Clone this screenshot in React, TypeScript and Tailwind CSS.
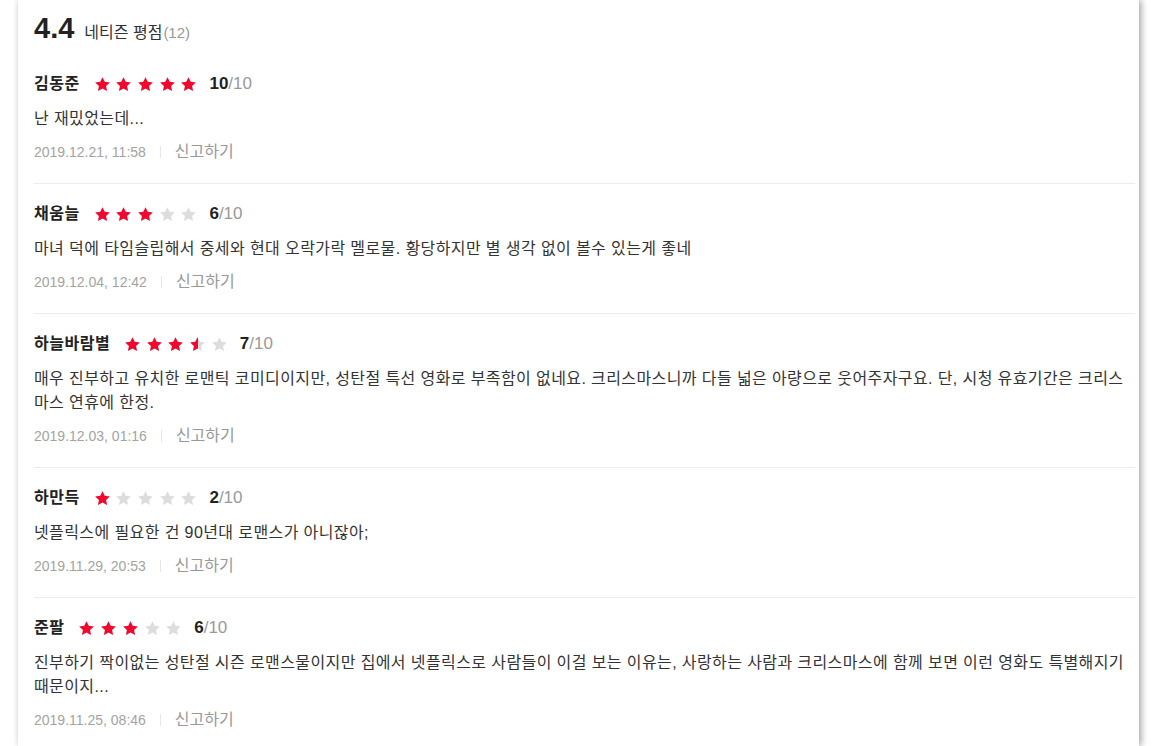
import React from "react";

type Review = {
  name: string;
  score: number;
  text: string;
  date: string;
};

const reviews: Review[] = [
  { name: "김동준", score: 10, text: "난 재밌었는데...", date: "2019.12.21, 11:58" },
  {
    name: "채움늘",
    score: 6,
    text: "마녀 덕에 타임슬립해서 중세와 현대 오락가락 멜로물. 황당하지만 별 생각 없이 볼수 있는게 좋네",
    date: "2019.12.04, 12:42",
  },
  {
    name: "하늘바람별",
    score: 7,
    text: "매우 진부하고 유치한 로맨틱 코미디이지만, 성탄절 특선 영화로 부족함이 없네요. 크리스마스니까 다들 넓은 아량으로 웃어주자구요. 단, 시청 유효기간은 크리스마스 연휴에 한정.",
    date: "2019.12.03, 01:16",
  },
  { name: "하만득", score: 2, text: "넷플릭스에 필요한 건 90년대 로맨스가 아니잖아;", date: "2019.11.29, 20:53" },
  {
    name: "준팔",
    score: 6,
    text: "진부하기 짝이없는 성탄절 시즌 로맨스물이지만 집에서 넷플릭스로 사람들이 이걸 보는 이유는, 사랑하는 사람과 크리스마스에 함께 보면 이런 영화도 특별해지기 때문이지...",
    date: "2019.11.25, 08:46",
  },
];

const STAR = "M12 1.6l3.1 6.6 7.2.9-5.3 5 1.4 7.2L12 17.7l-6.4 3.6 1.4-7.2-5.3-5 7.2-.9L12 1.6z";

const Star = ({ fill }: { fill: number }) => (
  <span className="relative block w-[17px] h-[17px]">
    <svg viewBox="0 0 24 24" className="absolute inset-0 w-[17px] h-[17px]">
      <path d={STAR} fill="#dddddd" />
    </svg>
    {fill > 0 && (
      <span className={`absolute left-0 top-0 h-[17px] overflow-hidden ${fill >= 1 ? "w-[17px]" : "w-[8.5px]"}`}>
        <svg viewBox="0 0 24 24" className="w-[17px] h-[17px]">
          <path d={STAR} fill="#f2072e" />
        </svg>
      </span>
    )}
  </span>
);

const Stars = ({ score }: { score: number }) => {
  const half = score / 2;
  return (
    <div className="flex items-center gap-[4.7px]">
      {[0, 1, 2, 3, 4].map((i) => (
        <Star key={i} fill={Math.max(0, Math.min(1, half - i))} />
      ))}
    </div>
  );
};

export default function App() {
  return (
    <div
      className="h-[746px] bg-white overflow-hidden pl-[18px] pr-[19px]"
      style={{ fontFamily: '"Liberation Sans", "Noto Sans CJK KR", sans-serif' }}
    >
      <div className="h-full bg-white shadow-[2px_0_7px_rgba(0,0,0,0.38)] pl-[16px] pr-[4px]">
        {/* Header */}
        <div className="flex items-baseline pt-[11px] h-[54px]">
          <span className="text-[29px] font-bold leading-[34px] text-[#222]">4.4</span>
          <span className="ml-[10px] text-[16px] text-[#333]">네티즌 평점</span>
          <span className="ml-[1px] text-[15px] text-[#999]">(12)</span>
        </div>

        {/* Reviews */}
        <ul>
          {reviews.map((r, i) => (
            <li
              key={i}
              className={`pt-[19px] pb-[21px] ${i < reviews.length - 1 ? "border-b border-[#ececec]" : ""}`}
            >
              <div className="flex items-center h-[22px]">
                <span className="text-[16px] font-bold tracking-[0.5px] text-[#222] mr-[14px]">{r.name}</span>
                <Stars score={r.score} />
                <span className="ml-[12px] text-[17px] leading-[22px]">
                  <span className="font-bold text-[#222]">{r.score}</span>
                  <span className="text-[#999]">/10</span>
                </span>
              </div>
              <p className="mt-[12px] text-[16px] tracking-[0.4px] leading-[24px] text-[#333] pr-[6px]">{r.text}</p>
              <div className="mt-[11px] flex items-center h-[20px]">
                <span className="text-[14px] text-[#a3a3a3]">{r.date}</span>
                <span className="mx-[14px] w-px h-[12px] bg-[#e6e6e6]" />
                <button className="text-[16px] text-[#999]">신고하기</button>
              </div>
            </li>
          ))}
        </ul>
      </div>
    </div>
  );
}
